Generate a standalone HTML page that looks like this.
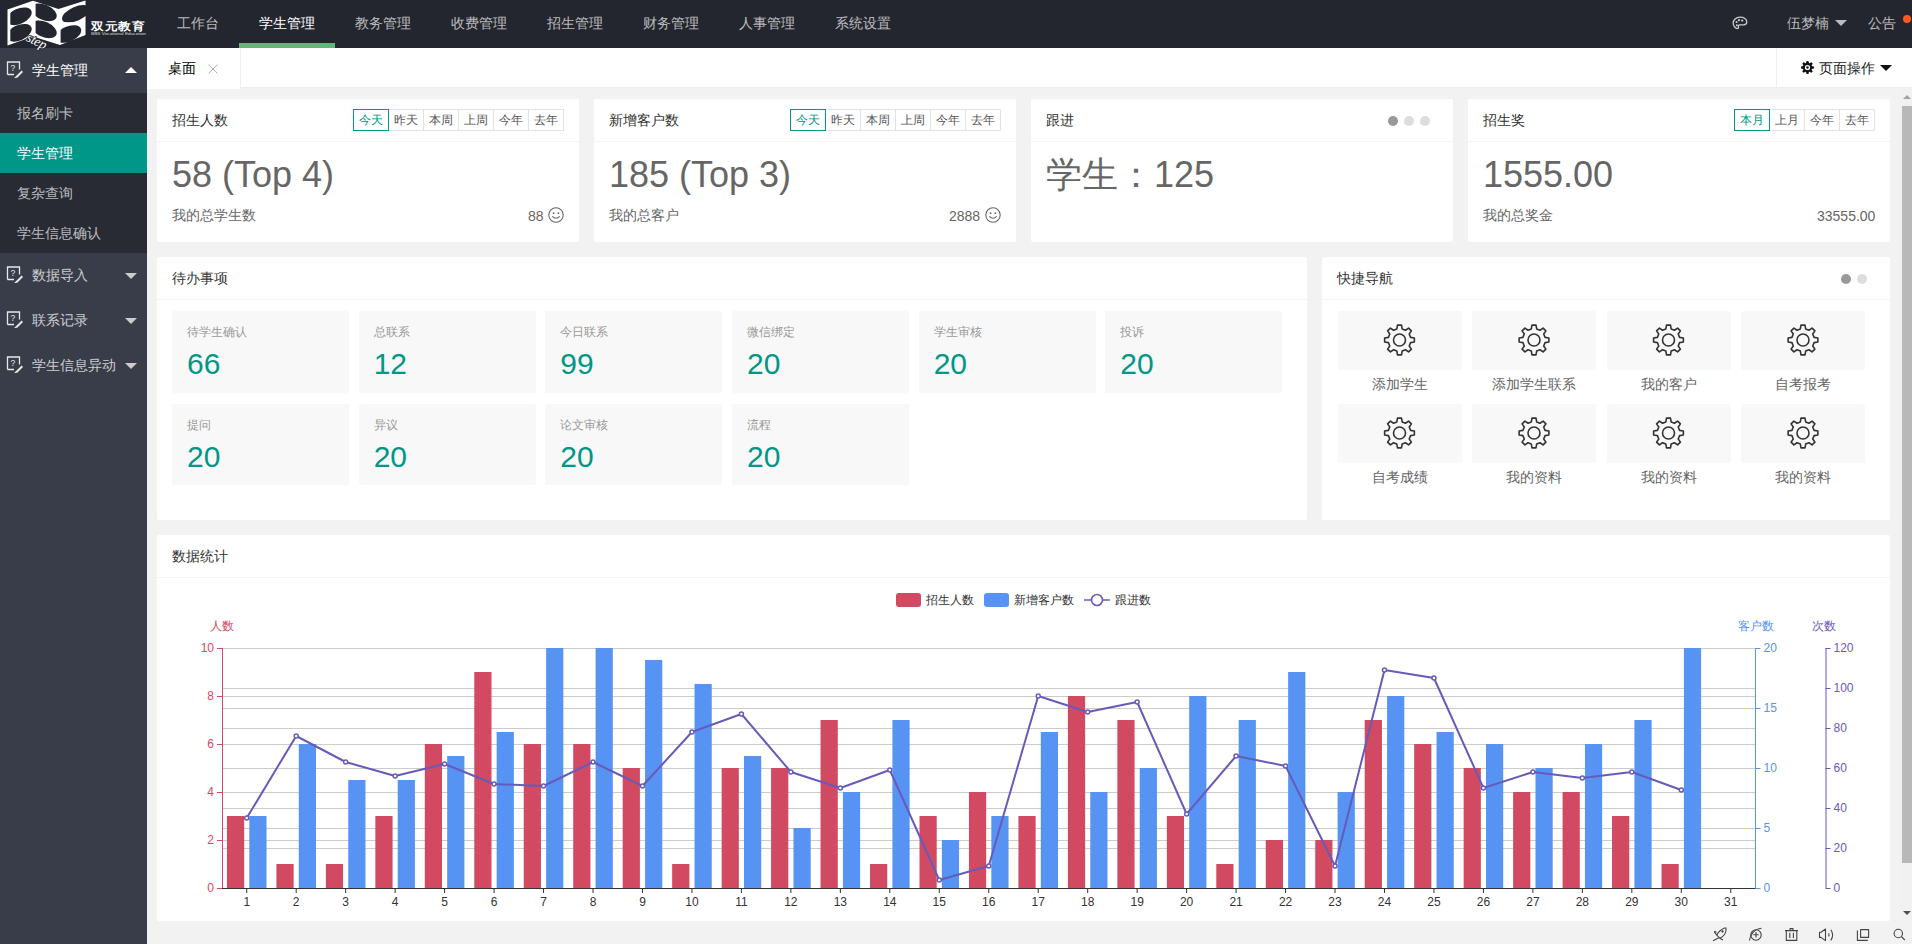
<!DOCTYPE html><html><head><meta charset="utf-8"><style>
*{margin:0;padding:0;box-sizing:border-box}
html,body{width:1912px;height:944px;overflow:hidden;background:#f2f2f2;font-family:"Liberation Sans",sans-serif;font-size:14px;color:#333}
.a{position:absolute}
.hdr{left:0;top:0;width:1912px;height:48px;background:#23262e}
.nav{top:0;height:48px;line-height:46px;color:rgba(255,255,255,.7);font-size:14px;white-space:nowrap}
.side{left:0;top:48px;width:147px;height:896px;background:#393d49}
.sitem{left:0;width:147px;height:45px;line-height:45px;color:rgba(255,255,255,.75);font-size:14px}
.child{left:0;width:147px;height:40px;line-height:40px;color:rgba(255,255,255,.7);padding-left:17px}
.tabs{left:147px;top:48px;width:1765px;height:40px;background:#fff;border-bottom:1px solid #eee}
.card{background:#fff;border-radius:2px}
.ct{font-size:14px;color:#333;line-height:20px;white-space:nowrap}
.btn{height:22px;line-height:20px;border:1px solid #e2e2e2;font-size:12px;color:#555;text-align:center;background:#fff}
.big{font-size:36px;color:#666;line-height:36px;white-space:nowrap;margin-top:1px}
.sub{font-size:14px;color:#666;line-height:20px;white-space:nowrap}
.hl{height:1px;background:#f3f3f3}
.bl{background:#f8f8f8;border-radius:2px}
.bl h3{position:absolute;left:15px;top:14px;font-size:12px;font-weight:normal;color:#999;line-height:14px}
.bl p{position:absolute;left:15px;top:38px;font-size:30px;color:#009688;line-height:30px}
.sc{background:#f8f8f8;border-radius:2px}
.scl{font-size:14px;color:#666;text-align:center;line-height:20px;white-space:nowrap}
</style></head><body><div class="a hdr"></div>
<svg class="a" style="left:0;top:0;z-index:5" width="160" height="52" viewBox="0 0 160 52">
<defs>
<clipPath id="cl"><rect x="10.3" y="0" width="22.5" height="52"/></clipPath>
<clipPath id="cm"><rect x="35.6" y="0" width="23" height="52"/></clipPath>
<clipPath id="cr1"><rect x="60.5" y="0" width="40" height="22.3"/></clipPath>
<clipPath id="cr2"><rect x="60.6" y="22.3" width="30" height="30"/></clipPath>
</defs>
<path d="M7.5 9.5 L33 0.8 L58.5 9 L85.5 0.5 L85.5 35 L60 45 L33 36.5 L7.5 45.5 Z" fill="#fff"/>
<g fill="#23262e">
<g clip-path="url(#cl)"><ellipse cx="19" cy="16.3" rx="13.5" ry="7.6" transform="rotate(-24 19 16.3)"/>
<ellipse cx="19" cy="32.8" rx="13.5" ry="7.6" transform="rotate(-24 19 32.8)"/></g>
<g clip-path="url(#cm)"><ellipse cx="44" cy="12.3" rx="13.5" ry="7.6" transform="rotate(24 44 12.3)"/>
<ellipse cx="44" cy="29.3" rx="13.5" ry="7.6" transform="rotate(24 44 29.3)"/></g>
<g clip-path="url(#cr1)"><ellipse cx="76" cy="13.8" rx="15" ry="7" transform="rotate(-24 76 13.8)"/></g>
<g clip-path="url(#cr2)"><ellipse cx="68.5" cy="34" rx="13.5" ry="7.6" transform="rotate(-24 68.5 34)"/></g>
</g>
<text x="0" y="0" transform="translate(25.5 40.5) rotate(26)" font-family="Liberation Serif, serif" font-style="italic" font-size="13.5" fill="#fff" stroke="#23262e" stroke-width="1.6" paint-order="stroke" letter-spacing="-0.3">step</text>
<text x="91" y="34.8" font-size="13.5" font-weight="bold" fill="#fff" textLength="55" lengthAdjust="spacingAndGlyphs" transform="scale(1 0.85)">双元教育</text>
<text x="91" y="35.2" font-size="3.6" fill="#ddd" textLength="55" lengthAdjust="spacingAndGlyphs">BBS Vocational Education</text>
</svg>
<div class="a nav" style="left:177px;">工作台</div>
<div class="a nav" style="left:259px;color:#fff;">学生管理</div>
<div class="a nav" style="left:355px;">教务管理</div>
<div class="a nav" style="left:451px;">收费管理</div>
<div class="a nav" style="left:547px;">招生管理</div>
<div class="a nav" style="left:643px;">财务管理</div>
<div class="a nav" style="left:739px;">人事管理</div>
<div class="a nav" style="left:835px;">系统设置</div>
<div class="a" style="left:239px;top:43px;width:96px;height:5px;background:#5fb878"></div>
<svg class="a" style="left:1732px;top:16px" width="16" height="14" viewBox="0 0 16 14"><path d="M8 1.2 C3.8 1.2 1.2 4 1.2 7 C1.2 10.3 3.5 12.6 5.6 12.6 C6.8 12.6 6.6 11.5 6.4 10.8 C6.1 9.8 6.6 8.8 7.8 8.8 L11.6 8.8 C13.6 8.8 14.8 7.8 14.8 5.8 C14.8 3.2 12 1.2 8 1.2 Z" fill="none" stroke="#ccc" stroke-width="1.3"/><circle cx="4.6" cy="6" r="1.1" fill="#ccc"/><circle cx="7" cy="4.2" r="1.1" fill="#ccc"/><circle cx="10.2" cy="4.6" r="1.1" fill="#ccc"/><circle cx="4.8" cy="9.2" r="1" fill="#ccc"/></svg>
<div class="a nav" style="left:1787px;">伍梦楠</div>
<div class="a" style="left:1835px;top:20px;width:0;height:0;border-left:6px solid transparent;border-right:6px solid transparent;border-top:6px solid #bbb"></div>
<div class="a nav" style="left:1868px;">公告</div>
<div class="a" style="left:1903px;top:15px;width:8px;height:8px;border-radius:50%;background:#ff5722"></div>
<div class="a side"></div>
<div class="a" style="left:0;top:93px;width:147px;height:160px;background:#282b33"></div>
<div class="a" style="left:0;top:133px;width:147px;height:40px;background:#009688"></div>
<svg class="a" style="left:6px;top:61px" width="18" height="18" viewBox="0 0 18 18"><path d="M1.5 13.5 V1 H13.5 V8.5 M1.5 13.5 H8" fill="none" stroke="#e8e8e8" stroke-width="1.3"/><text x="4.6" y="9.6" font-size="8.5" fill="#e8e8e8" font-family="Liberation Sans">?</text><path d="M9.6 15.6 L15.6 9.6 L17 11 L11 17 Z" fill="#e8e8e8"/><path d="M8.2 17 L9.6 15.6 L11 17 Z" fill="#e8e8e8"/></svg>
<div class="a sitem" style="top:48px;left:32px;width:90px;color:#fff">学生管理</div>
<div class="a" style="left:125px;top:67px;width:0;height:0;border-left:6px solid transparent;border-right:6px solid transparent;border-bottom:6px solid #fff"></div>
<div class="a child" style="top:93px;">报名刷卡</div>
<div class="a child" style="top:133px;color:#fff;">学生管理</div>
<div class="a child" style="top:173px;">复杂查询</div>
<div class="a child" style="top:213px;">学生信息确认</div>
<svg class="a" style="left:6px;top:266px" width="18" height="18" viewBox="0 0 18 18"><path d="M1.5 13.5 V1 H13.5 V8.5 M1.5 13.5 H8" fill="none" stroke="#e8e8e8" stroke-width="1.3"/><text x="4.6" y="9.6" font-size="8.5" fill="#e8e8e8" font-family="Liberation Sans">?</text><path d="M9.6 15.6 L15.6 9.6 L17 11 L11 17 Z" fill="#e8e8e8"/><path d="M8.2 17 L9.6 15.6 L11 17 Z" fill="#e8e8e8"/></svg>
<div class="a sitem" style="top:253px;left:32px;width:95px">数据导入</div>
<div class="a" style="left:125px;top:273px;width:0;height:0;border-left:6px solid transparent;border-right:6px solid transparent;border-top:6px solid #ccc"></div>
<svg class="a" style="left:6px;top:311px" width="18" height="18" viewBox="0 0 18 18"><path d="M1.5 13.5 V1 H13.5 V8.5 M1.5 13.5 H8" fill="none" stroke="#e8e8e8" stroke-width="1.3"/><text x="4.6" y="9.6" font-size="8.5" fill="#e8e8e8" font-family="Liberation Sans">?</text><path d="M9.6 15.6 L15.6 9.6 L17 11 L11 17 Z" fill="#e8e8e8"/><path d="M8.2 17 L9.6 15.6 L11 17 Z" fill="#e8e8e8"/></svg>
<div class="a sitem" style="top:298px;left:32px;width:95px">联系记录</div>
<div class="a" style="left:125px;top:318px;width:0;height:0;border-left:6px solid transparent;border-right:6px solid transparent;border-top:6px solid #ccc"></div>
<svg class="a" style="left:6px;top:356px" width="18" height="18" viewBox="0 0 18 18"><path d="M1.5 13.5 V1 H13.5 V8.5 M1.5 13.5 H8" fill="none" stroke="#e8e8e8" stroke-width="1.3"/><text x="4.6" y="9.6" font-size="8.5" fill="#e8e8e8" font-family="Liberation Sans">?</text><path d="M9.6 15.6 L15.6 9.6 L17 11 L11 17 Z" fill="#e8e8e8"/><path d="M8.2 17 L9.6 15.6 L11 17 Z" fill="#e8e8e8"/></svg>
<div class="a sitem" style="top:343px;left:32px;width:95px">学生信息异动</div>
<div class="a" style="left:125px;top:363px;width:0;height:0;border-left:6px solid transparent;border-right:6px solid transparent;border-top:6px solid #ccc"></div>
<div class="a tabs"></div>
<div class="a" style="left:147px;top:48px;width:94px;height:41px;background:#fff;border-right:1px solid #eee"></div>
<div class="a ct" style="left:168px;top:58px;color:#000">桌面</div>
<svg class="a" style="left:206px;top:62px" width="14" height="14"><path d="M2.5 2.5 L11.5 11.5 M11.5 2.5 L2.5 11.5" stroke="#b0b0b0" stroke-width="1"/></svg>
<div class="a" style="left:1776px;top:48px;width:1px;height:40px;background:#eee"></div>
<svg class="a" style="left:1801px;top:61px" width="13" height="13" viewBox="0 0 13 13"><path d="M4.94,2.17 L5.58,0.06 L7.42,0.06 L8.06,2.17 L8.46,2.34 L10.40,1.30 L11.70,2.60 L10.66,4.54 L10.83,4.94 L12.94,5.58 L12.94,7.42 L10.83,8.06 L10.66,8.46 L11.70,10.40 L10.40,11.70 L8.46,10.66 L8.06,10.83 L7.42,12.94 L5.58,12.94 L4.94,10.83 L4.54,10.66 L2.60,11.70 L1.30,10.40 L2.34,8.46 L2.17,8.06 L0.06,7.42 L0.06,5.58 L2.17,4.94 L2.34,4.54 L1.30,2.60 L2.60,1.30 L4.54,2.34Z" fill="#111"/><circle cx="6.5" cy="6.5" r="2.6" fill="#fff"/><circle cx="6.5" cy="6.5" r="1.2" fill="#111"/></svg>
<div class="a ct" style="left:1819px;top:58px;color:#222">页面操作</div>
<div class="a" style="left:1880px;top:65px;width:0;height:0;border-left:6px solid transparent;border-right:6px solid transparent;border-top:6px solid #111"></div>
<div class="a" style="left:1900px;top:89px;width:12px;height:832px;background:#f1f1f1"></div>
<div class="a" style="left:1902px;top:106px;width:10px;height:757px;background:#b8b8b8"></div>
<div class="a" style="left:1903px;top:95px;width:0;height:0;border-left:4px solid transparent;border-right:4px solid transparent;border-bottom:4px solid #a3a3a3"></div>
<div class="a" style="left:1903px;top:911px;width:0;height:0;border-left:4px solid transparent;border-right:4px solid transparent;border-top:4px solid #505050"></div>
<div class="a card" style="left:157px;top:99px;width:422px;height:143px"></div>
<div class="a hl" style="left:157px;top:141px;width:422px"></div>
<div class="a card" style="left:594px;top:99px;width:422px;height:143px"></div>
<div class="a hl" style="left:594px;top:141px;width:422px"></div>
<div class="a card" style="left:1031px;top:99px;width:422px;height:143px"></div>
<div class="a hl" style="left:1031px;top:141px;width:422px"></div>
<div class="a card" style="left:1468px;top:99px;width:422px;height:143px"></div>
<div class="a hl" style="left:1468px;top:141px;width:422px"></div>
<div class="a ct" style="left:172px;top:110px">招生人数</div>
<div class="a btn" style="left:353px;top:109px;width:36px;border-color:#009688;color:#009688;z-index:2">今天</div><div class="a btn" style="left:388px;top:109px;width:36px;">昨天</div><div class="a btn" style="left:423px;top:109px;width:36px;">本周</div><div class="a btn" style="left:458px;top:109px;width:36px;">上周</div><div class="a btn" style="left:493px;top:109px;width:36px;">今年</div><div class="a btn" style="left:528px;top:109px;width:36px;">去年</div>
<div class="a big" style="left:172px;top:156px">58 (Top 4)</div>
<div class="a sub" style="left:172px;top:205px">我的总学生数</div>
<div class="a sub" style="left:528px;top:206px">88</div>
<svg class="a" style="left:548px;top:207px" width="16" height="16" viewBox="0 0 16 16"><circle cx="8" cy="8" r="7.2" fill="none" stroke="#666" stroke-width="1.1"/><circle cx="5.6" cy="6.2" r="0.9" fill="#666"/><circle cx="10.4" cy="6.2" r="0.9" fill="#666"/><path d="M4.3 9.3 Q8 13.2 11.7 9.3" fill="none" stroke="#666" stroke-width="1.1"/></svg>
<div class="a ct" style="left:609px;top:110px">新增客户数</div>
<div class="a btn" style="left:790px;top:109px;width:36px;border-color:#009688;color:#009688;z-index:2">今天</div><div class="a btn" style="left:825px;top:109px;width:36px;">昨天</div><div class="a btn" style="left:860px;top:109px;width:36px;">本周</div><div class="a btn" style="left:895px;top:109px;width:36px;">上周</div><div class="a btn" style="left:930px;top:109px;width:36px;">今年</div><div class="a btn" style="left:965px;top:109px;width:36px;">去年</div>
<div class="a big" style="left:609px;top:156px">185 (Top 3)</div>
<div class="a sub" style="left:609px;top:205px">我的总客户</div>
<div class="a sub" style="left:949px;top:206px">2888</div>
<svg class="a" style="left:985px;top:207px" width="16" height="16" viewBox="0 0 16 16"><circle cx="8" cy="8" r="7.2" fill="none" stroke="#666" stroke-width="1.1"/><circle cx="5.6" cy="6.2" r="0.9" fill="#666"/><circle cx="10.4" cy="6.2" r="0.9" fill="#666"/><path d="M4.3 9.3 Q8 13.2 11.7 9.3" fill="none" stroke="#666" stroke-width="1.1"/></svg>
<div class="a ct" style="left:1046px;top:110px">跟进</div>
<div class="a" style="left:1388px;top:116px;width:10px;height:10px;border-radius:50%;background:#999"></div>
<div class="a" style="left:1404px;top:116px;width:10px;height:10px;border-radius:50%;background:#ddd"></div>
<div class="a" style="left:1420px;top:116px;width:10px;height:10px;border-radius:50%;background:#ddd"></div>
<div class="a big" style="left:1046px;top:156px">学生：125</div>
<div class="a ct" style="left:1483px;top:110px">招生奖</div>
<div class="a btn" style="left:1734px;top:109px;width:36px;border-color:#009688;color:#009688;z-index:2">本月</div><div class="a btn" style="left:1769px;top:109px;width:36px;">上月</div><div class="a btn" style="left:1804px;top:109px;width:36px;">今年</div><div class="a btn" style="left:1839px;top:109px;width:36px;">去年</div>
<div class="a big" style="left:1483px;top:156px">1555.00</div>
<div class="a sub" style="left:1483px;top:205px">我的总奖金</div>
<div class="a sub" style="left:1817px;top:206px">33555.00</div>
<div class="a card" style="left:157px;top:257px;width:1150px;height:263px"></div>
<div class="a hl" style="left:157px;top:299px;width:1150px"></div>
<div class="a ct" style="left:172px;top:268px">待办事项</div>
<div class="a bl" style="left:172.0px;top:311.0px;width:177px;height:81.5px"><h3>待学生确认</h3><p>66</p></div>
<div class="a bl" style="left:358.7px;top:311.0px;width:177px;height:81.5px"><h3>总联系</h3><p>12</p></div>
<div class="a bl" style="left:545.3px;top:311.0px;width:177px;height:81.5px"><h3>今日联系</h3><p>99</p></div>
<div class="a bl" style="left:732.0px;top:311.0px;width:177px;height:81.5px"><h3>微信绑定</h3><p>20</p></div>
<div class="a bl" style="left:918.7px;top:311.0px;width:177px;height:81.5px"><h3>学生审核</h3><p>20</p></div>
<div class="a bl" style="left:1105.3px;top:311.0px;width:177px;height:81.5px"><h3>投诉</h3><p>20</p></div>
<div class="a bl" style="left:172.0px;top:403.5px;width:177px;height:81.5px"><h3>提问</h3><p>20</p></div>
<div class="a bl" style="left:358.7px;top:403.5px;width:177px;height:81.5px"><h3>异议</h3><p>20</p></div>
<div class="a bl" style="left:545.3px;top:403.5px;width:177px;height:81.5px"><h3>论文审核</h3><p>20</p></div>
<div class="a bl" style="left:732.0px;top:403.5px;width:177px;height:81.5px"><h3>流程</h3><p>20</p></div>
<div class="a card" style="left:1322px;top:257px;width:568px;height:263px"></div>
<div class="a hl" style="left:1322px;top:299px;width:568px"></div>
<div class="a ct" style="left:1337px;top:268px">快捷导航</div>
<div class="a" style="left:1841px;top:274px;width:10px;height:10px;border-radius:50%;background:#999"></div>
<div class="a" style="left:1857px;top:274px;width:10px;height:10px;border-radius:50%;background:#ddd"></div>
<div class="a sc" style="left:1337.5px;top:311px;width:124px;height:59px"></div>
<div class="a scl" style="left:1337.5px;top:374px;width:124px">添加学生</div>
<div class="a sc" style="left:1472.0px;top:311px;width:124px;height:59px"></div>
<div class="a scl" style="left:1472.0px;top:374px;width:124px">添加学生联系</div>
<div class="a sc" style="left:1606.5px;top:311px;width:124px;height:59px"></div>
<div class="a scl" style="left:1606.5px;top:374px;width:124px">我的客户</div>
<div class="a sc" style="left:1741.0px;top:311px;width:124px;height:59px"></div>
<div class="a scl" style="left:1741.0px;top:374px;width:124px">自考报考</div>
<div class="a sc" style="left:1337.5px;top:404px;width:124px;height:59px"></div>
<div class="a scl" style="left:1337.5px;top:467px;width:124px">自考成绩</div>
<div class="a sc" style="left:1472.0px;top:404px;width:124px;height:59px"></div>
<div class="a scl" style="left:1472.0px;top:467px;width:124px">我的资料</div>
<div class="a sc" style="left:1606.5px;top:404px;width:124px;height:59px"></div>
<div class="a scl" style="left:1606.5px;top:467px;width:124px">我的资料</div>
<div class="a sc" style="left:1741.0px;top:404px;width:124px;height:59px"></div>
<div class="a scl" style="left:1741.0px;top:467px;width:124px">我的资料</div>
<div class="a card" style="left:157px;top:535px;width:1733px;height:386px"></div>
<div class="a hl" style="left:157px;top:577px;width:1733px"></div>
<div class="a ct" style="left:172px;top:546px">数据统计</div>
<svg width="1733" height="386" viewBox="157 535 1733 386" style="position:absolute;left:157px;top:535px" font-family="Liberation Sans, sans-serif" font-size="12">
<line x1="222" y1="648.5" x2="1755.5" y2="648.5" stroke="#ccc" stroke-width="1"/>
<line x1="222" y1="688.5" x2="1755.5" y2="688.5" stroke="#ccc" stroke-width="1"/>
<line x1="222" y1="696.5" x2="1755.5" y2="696.5" stroke="#ccc" stroke-width="1"/>
<line x1="222" y1="708.5" x2="1755.5" y2="708.5" stroke="#ccc" stroke-width="1"/>
<line x1="222" y1="728.5" x2="1755.5" y2="728.5" stroke="#ccc" stroke-width="1"/>
<line x1="222" y1="744.5" x2="1755.5" y2="744.5" stroke="#ccc" stroke-width="1"/>
<line x1="222" y1="768.5" x2="1755.5" y2="768.5" stroke="#ccc" stroke-width="1"/>
<line x1="222" y1="792.5" x2="1755.5" y2="792.5" stroke="#ccc" stroke-width="1"/>
<line x1="222" y1="808.5" x2="1755.5" y2="808.5" stroke="#ccc" stroke-width="1"/>
<line x1="222" y1="828.5" x2="1755.5" y2="828.5" stroke="#ccc" stroke-width="1"/>
<line x1="222" y1="840.5" x2="1755.5" y2="840.5" stroke="#ccc" stroke-width="1"/>
<line x1="222" y1="848.5" x2="1755.5" y2="848.5" stroke="#ccc" stroke-width="1"/>
<rect x="226.95" y="816" width="17.21" height="72" fill="#d14a61"/>
<rect x="249.31" y="816" width="17.21" height="72" fill="#5793f3"/>
<rect x="276.41" y="864" width="17.21" height="24" fill="#d14a61"/>
<rect x="298.78" y="744" width="17.21" height="144" fill="#5793f3"/>
<rect x="325.88" y="864" width="17.21" height="24" fill="#d14a61"/>
<rect x="348.25" y="780" width="17.21" height="108" fill="#5793f3"/>
<rect x="375.35" y="816" width="17.21" height="72" fill="#d14a61"/>
<rect x="397.72" y="780" width="17.21" height="108" fill="#5793f3"/>
<rect x="424.82" y="744" width="17.21" height="144" fill="#d14a61"/>
<rect x="447.19" y="756" width="17.21" height="132" fill="#5793f3"/>
<rect x="474.29" y="672" width="17.21" height="216" fill="#d14a61"/>
<rect x="496.65" y="732" width="17.21" height="156" fill="#5793f3"/>
<rect x="523.75" y="744" width="17.21" height="144" fill="#d14a61"/>
<rect x="546.12" y="648" width="17.21" height="240" fill="#5793f3"/>
<rect x="573.22" y="744" width="17.21" height="144" fill="#d14a61"/>
<rect x="595.59" y="648" width="17.21" height="240" fill="#5793f3"/>
<rect x="622.69" y="768" width="17.21" height="120" fill="#d14a61"/>
<rect x="645.06" y="660" width="17.21" height="228" fill="#5793f3"/>
<rect x="672.16" y="864" width="17.21" height="24" fill="#d14a61"/>
<rect x="694.52" y="684" width="17.21" height="204" fill="#5793f3"/>
<rect x="721.62" y="768" width="17.21" height="120" fill="#d14a61"/>
<rect x="743.99" y="756" width="17.21" height="132" fill="#5793f3"/>
<rect x="771.09" y="768" width="17.21" height="120" fill="#d14a61"/>
<rect x="793.46" y="828" width="17.21" height="60" fill="#5793f3"/>
<rect x="820.56" y="720" width="17.21" height="168" fill="#d14a61"/>
<rect x="842.93" y="792" width="17.21" height="96" fill="#5793f3"/>
<rect x="870.03" y="864" width="17.21" height="24" fill="#d14a61"/>
<rect x="892.40" y="720" width="17.21" height="168" fill="#5793f3"/>
<rect x="919.50" y="816" width="17.21" height="72" fill="#d14a61"/>
<rect x="941.86" y="840" width="17.21" height="48" fill="#5793f3"/>
<rect x="968.96" y="792" width="17.21" height="96" fill="#d14a61"/>
<rect x="991.33" y="816" width="17.21" height="72" fill="#5793f3"/>
<rect x="1018.43" y="816" width="17.21" height="72" fill="#d14a61"/>
<rect x="1040.80" y="732" width="17.21" height="156" fill="#5793f3"/>
<rect x="1067.90" y="696" width="17.21" height="192" fill="#d14a61"/>
<rect x="1090.27" y="792" width="17.21" height="96" fill="#5793f3"/>
<rect x="1117.37" y="720" width="17.21" height="168" fill="#d14a61"/>
<rect x="1139.73" y="768" width="17.21" height="120" fill="#5793f3"/>
<rect x="1166.83" y="816" width="17.21" height="72" fill="#d14a61"/>
<rect x="1189.20" y="696" width="17.21" height="192" fill="#5793f3"/>
<rect x="1216.30" y="864" width="17.21" height="24" fill="#d14a61"/>
<rect x="1238.67" y="720" width="17.21" height="168" fill="#5793f3"/>
<rect x="1265.77" y="840" width="17.21" height="48" fill="#d14a61"/>
<rect x="1288.14" y="672" width="17.21" height="216" fill="#5793f3"/>
<rect x="1315.24" y="840" width="17.21" height="48" fill="#d14a61"/>
<rect x="1337.61" y="792" width="17.21" height="96" fill="#5793f3"/>
<rect x="1364.70" y="720" width="17.21" height="168" fill="#d14a61"/>
<rect x="1387.07" y="696" width="17.21" height="192" fill="#5793f3"/>
<rect x="1414.17" y="744" width="17.21" height="144" fill="#d14a61"/>
<rect x="1436.54" y="732" width="17.21" height="156" fill="#5793f3"/>
<rect x="1463.64" y="768" width="17.21" height="120" fill="#d14a61"/>
<rect x="1486.01" y="744" width="17.21" height="144" fill="#5793f3"/>
<rect x="1513.11" y="792" width="17.21" height="96" fill="#d14a61"/>
<rect x="1535.48" y="768" width="17.21" height="120" fill="#5793f3"/>
<rect x="1562.58" y="792" width="17.21" height="96" fill="#d14a61"/>
<rect x="1584.94" y="744" width="17.21" height="144" fill="#5793f3"/>
<rect x="1612.04" y="816" width="17.21" height="72" fill="#d14a61"/>
<rect x="1634.41" y="720" width="17.21" height="168" fill="#5793f3"/>
<rect x="1661.51" y="864" width="17.21" height="24" fill="#d14a61"/>
<rect x="1683.88" y="648" width="17.21" height="240" fill="#5793f3"/>
<polyline points="246.73,818 296.20,736 345.67,762 395.14,776 444.60,764 494.07,784 543.54,786 593.01,762 642.48,786 691.94,732 741.41,714 790.88,772 840.35,788 889.81,770 939.28,880 988.75,866 1038.22,696 1087.69,712 1137.15,702 1186.62,814 1236.09,756 1285.56,766 1335.02,866 1384.49,670 1433.96,678 1483.43,788 1532.90,772 1582.36,778 1631.83,772 1681.30,790" fill="none" stroke="#675bba" stroke-width="2" stroke-linejoin="round"/>
<circle cx="246.73" cy="818" r="2" fill="#fff" stroke="#675bba" stroke-width="1.5"/>
<circle cx="296.20" cy="736" r="2" fill="#fff" stroke="#675bba" stroke-width="1.5"/>
<circle cx="345.67" cy="762" r="2" fill="#fff" stroke="#675bba" stroke-width="1.5"/>
<circle cx="395.14" cy="776" r="2" fill="#fff" stroke="#675bba" stroke-width="1.5"/>
<circle cx="444.60" cy="764" r="2" fill="#fff" stroke="#675bba" stroke-width="1.5"/>
<circle cx="494.07" cy="784" r="2" fill="#fff" stroke="#675bba" stroke-width="1.5"/>
<circle cx="543.54" cy="786" r="2" fill="#fff" stroke="#675bba" stroke-width="1.5"/>
<circle cx="593.01" cy="762" r="2" fill="#fff" stroke="#675bba" stroke-width="1.5"/>
<circle cx="642.48" cy="786" r="2" fill="#fff" stroke="#675bba" stroke-width="1.5"/>
<circle cx="691.94" cy="732" r="2" fill="#fff" stroke="#675bba" stroke-width="1.5"/>
<circle cx="741.41" cy="714" r="2" fill="#fff" stroke="#675bba" stroke-width="1.5"/>
<circle cx="790.88" cy="772" r="2" fill="#fff" stroke="#675bba" stroke-width="1.5"/>
<circle cx="840.35" cy="788" r="2" fill="#fff" stroke="#675bba" stroke-width="1.5"/>
<circle cx="889.81" cy="770" r="2" fill="#fff" stroke="#675bba" stroke-width="1.5"/>
<circle cx="939.28" cy="880" r="2" fill="#fff" stroke="#675bba" stroke-width="1.5"/>
<circle cx="988.75" cy="866" r="2" fill="#fff" stroke="#675bba" stroke-width="1.5"/>
<circle cx="1038.22" cy="696" r="2" fill="#fff" stroke="#675bba" stroke-width="1.5"/>
<circle cx="1087.69" cy="712" r="2" fill="#fff" stroke="#675bba" stroke-width="1.5"/>
<circle cx="1137.15" cy="702" r="2" fill="#fff" stroke="#675bba" stroke-width="1.5"/>
<circle cx="1186.62" cy="814" r="2" fill="#fff" stroke="#675bba" stroke-width="1.5"/>
<circle cx="1236.09" cy="756" r="2" fill="#fff" stroke="#675bba" stroke-width="1.5"/>
<circle cx="1285.56" cy="766" r="2" fill="#fff" stroke="#675bba" stroke-width="1.5"/>
<circle cx="1335.02" cy="866" r="2" fill="#fff" stroke="#675bba" stroke-width="1.5"/>
<circle cx="1384.49" cy="670" r="2" fill="#fff" stroke="#675bba" stroke-width="1.5"/>
<circle cx="1433.96" cy="678" r="2" fill="#fff" stroke="#675bba" stroke-width="1.5"/>
<circle cx="1483.43" cy="788" r="2" fill="#fff" stroke="#675bba" stroke-width="1.5"/>
<circle cx="1532.90" cy="772" r="2" fill="#fff" stroke="#675bba" stroke-width="1.5"/>
<circle cx="1582.36" cy="778" r="2" fill="#fff" stroke="#675bba" stroke-width="1.5"/>
<circle cx="1631.83" cy="772" r="2" fill="#fff" stroke="#675bba" stroke-width="1.5"/>
<circle cx="1681.30" cy="790" r="2" fill="#fff" stroke="#675bba" stroke-width="1.5"/>
<line x1="222.5" y1="648" x2="222.5" y2="888" stroke="#d14a61"/>
<line x1="217" y1="888.5" x2="222" y2="888.5" stroke="#d14a61"/>
<text x="214" y="892" text-anchor="end" fill="#d14a61">0</text>
<line x1="217" y1="840.5" x2="222" y2="840.5" stroke="#d14a61"/>
<text x="214" y="844" text-anchor="end" fill="#d14a61">2</text>
<line x1="217" y1="792.5" x2="222" y2="792.5" stroke="#d14a61"/>
<text x="214" y="796" text-anchor="end" fill="#d14a61">4</text>
<line x1="217" y1="744.5" x2="222" y2="744.5" stroke="#d14a61"/>
<text x="214" y="748" text-anchor="end" fill="#d14a61">6</text>
<line x1="217" y1="696.5" x2="222" y2="696.5" stroke="#d14a61"/>
<text x="214" y="700" text-anchor="end" fill="#d14a61">8</text>
<line x1="217" y1="648.5" x2="222" y2="648.5" stroke="#d14a61"/>
<text x="214" y="652" text-anchor="end" fill="#d14a61">10</text>
<text x="222" y="630" text-anchor="middle" fill="#d14a61">人数</text>
<line x1="1755.5" y1="648" x2="1755.5" y2="888" stroke="#5793f3"/>
<line x1="1755.5" y1="888.5" x2="1760.5" y2="888.5" stroke="#5793f3"/>
<text x="1763.5" y="892" fill="#5793f3">0</text>
<line x1="1755.5" y1="828.5" x2="1760.5" y2="828.5" stroke="#5793f3"/>
<text x="1763.5" y="832" fill="#5793f3">5</text>
<line x1="1755.5" y1="768.5" x2="1760.5" y2="768.5" stroke="#5793f3"/>
<text x="1763.5" y="772" fill="#5793f3">10</text>
<line x1="1755.5" y1="708.5" x2="1760.5" y2="708.5" stroke="#5793f3"/>
<text x="1763.5" y="712" fill="#5793f3">15</text>
<line x1="1755.5" y1="648.5" x2="1760.5" y2="648.5" stroke="#5793f3"/>
<text x="1763.5" y="652" fill="#5793f3">20</text>
<text x="1755.5" y="630" text-anchor="middle" fill="#5793f3">客户数</text>
<line x1="1826.0" y1="648" x2="1826.0" y2="888" stroke="#675bba"/>
<line x1="1825.5" y1="888.5" x2="1830.5" y2="888.5" stroke="#675bba"/>
<text x="1833.5" y="892" fill="#675bba">0</text>
<line x1="1825.5" y1="848.5" x2="1830.5" y2="848.5" stroke="#675bba"/>
<text x="1833.5" y="852" fill="#675bba">20</text>
<line x1="1825.5" y1="808.5" x2="1830.5" y2="808.5" stroke="#675bba"/>
<text x="1833.5" y="812" fill="#675bba">40</text>
<line x1="1825.5" y1="768.5" x2="1830.5" y2="768.5" stroke="#675bba"/>
<text x="1833.5" y="772" fill="#675bba">60</text>
<line x1="1825.5" y1="728.5" x2="1830.5" y2="728.5" stroke="#675bba"/>
<text x="1833.5" y="732" fill="#675bba">80</text>
<line x1="1825.5" y1="688.5" x2="1830.5" y2="688.5" stroke="#675bba"/>
<text x="1833.5" y="692" fill="#675bba">100</text>
<line x1="1825.5" y1="648.5" x2="1830.5" y2="648.5" stroke="#675bba"/>
<text x="1833.5" y="652" fill="#675bba">120</text>
<text x="1824.0" y="630" text-anchor="middle" fill="#675bba">次数</text>
<line x1="222" y1="888.5" x2="1755.5" y2="888.5" stroke="#333"/>
<line x1="246.73" y1="888" x2="246.73" y2="893" stroke="#333"/>
<text x="246.73" y="906" text-anchor="middle" fill="#333">1</text>
<line x1="296.20" y1="888" x2="296.20" y2="893" stroke="#333"/>
<text x="296.20" y="906" text-anchor="middle" fill="#333">2</text>
<line x1="345.67" y1="888" x2="345.67" y2="893" stroke="#333"/>
<text x="345.67" y="906" text-anchor="middle" fill="#333">3</text>
<line x1="395.14" y1="888" x2="395.14" y2="893" stroke="#333"/>
<text x="395.14" y="906" text-anchor="middle" fill="#333">4</text>
<line x1="444.60" y1="888" x2="444.60" y2="893" stroke="#333"/>
<text x="444.60" y="906" text-anchor="middle" fill="#333">5</text>
<line x1="494.07" y1="888" x2="494.07" y2="893" stroke="#333"/>
<text x="494.07" y="906" text-anchor="middle" fill="#333">6</text>
<line x1="543.54" y1="888" x2="543.54" y2="893" stroke="#333"/>
<text x="543.54" y="906" text-anchor="middle" fill="#333">7</text>
<line x1="593.01" y1="888" x2="593.01" y2="893" stroke="#333"/>
<text x="593.01" y="906" text-anchor="middle" fill="#333">8</text>
<line x1="642.48" y1="888" x2="642.48" y2="893" stroke="#333"/>
<text x="642.48" y="906" text-anchor="middle" fill="#333">9</text>
<line x1="691.94" y1="888" x2="691.94" y2="893" stroke="#333"/>
<text x="691.94" y="906" text-anchor="middle" fill="#333">10</text>
<line x1="741.41" y1="888" x2="741.41" y2="893" stroke="#333"/>
<text x="741.41" y="906" text-anchor="middle" fill="#333">11</text>
<line x1="790.88" y1="888" x2="790.88" y2="893" stroke="#333"/>
<text x="790.88" y="906" text-anchor="middle" fill="#333">12</text>
<line x1="840.35" y1="888" x2="840.35" y2="893" stroke="#333"/>
<text x="840.35" y="906" text-anchor="middle" fill="#333">13</text>
<line x1="889.81" y1="888" x2="889.81" y2="893" stroke="#333"/>
<text x="889.81" y="906" text-anchor="middle" fill="#333">14</text>
<line x1="939.28" y1="888" x2="939.28" y2="893" stroke="#333"/>
<text x="939.28" y="906" text-anchor="middle" fill="#333">15</text>
<line x1="988.75" y1="888" x2="988.75" y2="893" stroke="#333"/>
<text x="988.75" y="906" text-anchor="middle" fill="#333">16</text>
<line x1="1038.22" y1="888" x2="1038.22" y2="893" stroke="#333"/>
<text x="1038.22" y="906" text-anchor="middle" fill="#333">17</text>
<line x1="1087.69" y1="888" x2="1087.69" y2="893" stroke="#333"/>
<text x="1087.69" y="906" text-anchor="middle" fill="#333">18</text>
<line x1="1137.15" y1="888" x2="1137.15" y2="893" stroke="#333"/>
<text x="1137.15" y="906" text-anchor="middle" fill="#333">19</text>
<line x1="1186.62" y1="888" x2="1186.62" y2="893" stroke="#333"/>
<text x="1186.62" y="906" text-anchor="middle" fill="#333">20</text>
<line x1="1236.09" y1="888" x2="1236.09" y2="893" stroke="#333"/>
<text x="1236.09" y="906" text-anchor="middle" fill="#333">21</text>
<line x1="1285.56" y1="888" x2="1285.56" y2="893" stroke="#333"/>
<text x="1285.56" y="906" text-anchor="middle" fill="#333">22</text>
<line x1="1335.02" y1="888" x2="1335.02" y2="893" stroke="#333"/>
<text x="1335.02" y="906" text-anchor="middle" fill="#333">23</text>
<line x1="1384.49" y1="888" x2="1384.49" y2="893" stroke="#333"/>
<text x="1384.49" y="906" text-anchor="middle" fill="#333">24</text>
<line x1="1433.96" y1="888" x2="1433.96" y2="893" stroke="#333"/>
<text x="1433.96" y="906" text-anchor="middle" fill="#333">25</text>
<line x1="1483.43" y1="888" x2="1483.43" y2="893" stroke="#333"/>
<text x="1483.43" y="906" text-anchor="middle" fill="#333">26</text>
<line x1="1532.90" y1="888" x2="1532.90" y2="893" stroke="#333"/>
<text x="1532.90" y="906" text-anchor="middle" fill="#333">27</text>
<line x1="1582.36" y1="888" x2="1582.36" y2="893" stroke="#333"/>
<text x="1582.36" y="906" text-anchor="middle" fill="#333">28</text>
<line x1="1631.83" y1="888" x2="1631.83" y2="893" stroke="#333"/>
<text x="1631.83" y="906" text-anchor="middle" fill="#333">29</text>
<line x1="1681.30" y1="888" x2="1681.30" y2="893" stroke="#333"/>
<text x="1681.30" y="906" text-anchor="middle" fill="#333">30</text>
<line x1="1730.77" y1="888" x2="1730.77" y2="893" stroke="#333"/>
<text x="1730.77" y="906" text-anchor="middle" fill="#333">31</text>
<rect x="896" y="593" width="25" height="14" rx="3" fill="#d14a61"/>
<text x="926" y="603.5" fill="#333">招生人数</text>
<rect x="984" y="593" width="25" height="14" rx="3" fill="#5793f3"/>
<text x="1014" y="603.5" fill="#333">新增客户数</text>
<line x1="1084" y1="600" x2="1110" y2="600" stroke="#675bba" stroke-width="1.5"/>
<circle cx="1097" cy="600" r="5.5" fill="#fff" stroke="#675bba" stroke-width="1.6"/>
<text x="1115" y="603.5" fill="#333">跟进数</text>
</svg>
<svg class="a" style="left:0;top:0" width="1912" height="944"><path d="M1396.84,328.91 L1397.50,325.13 L1401.50,325.13 L1402.16,328.91 L1405.46,330.28 L1408.60,328.08 L1411.42,330.90 L1409.22,334.04 L1410.59,337.34 L1414.37,338.00 L1414.37,342.00 L1410.59,342.66 L1409.22,345.96 L1411.42,349.10 L1408.60,351.92 L1405.46,349.72 L1402.16,351.09 L1401.50,354.87 L1397.50,354.87 L1396.84,351.09 L1393.54,349.72 L1390.40,351.92 L1387.58,349.10 L1389.78,345.96 L1388.41,342.66 L1384.63,342.00 L1384.63,338.00 L1388.41,337.34 L1389.78,334.04 L1387.58,330.90 L1390.40,328.08 L1393.54,330.28Z" fill="none" stroke="#333" stroke-width="1.6" stroke-linejoin="round"/><circle cx="1399.5" cy="340" r="6.00" fill="none" stroke="#333" stroke-width="1.6"/><path d="M1531.34,328.91 L1532.00,325.13 L1536.00,325.13 L1536.66,328.91 L1539.96,330.28 L1543.10,328.08 L1545.92,330.90 L1543.72,334.04 L1545.09,337.34 L1548.87,338.00 L1548.87,342.00 L1545.09,342.66 L1543.72,345.96 L1545.92,349.10 L1543.10,351.92 L1539.96,349.72 L1536.66,351.09 L1536.00,354.87 L1532.00,354.87 L1531.34,351.09 L1528.04,349.72 L1524.90,351.92 L1522.08,349.10 L1524.28,345.96 L1522.91,342.66 L1519.13,342.00 L1519.13,338.00 L1522.91,337.34 L1524.28,334.04 L1522.08,330.90 L1524.90,328.08 L1528.04,330.28Z" fill="none" stroke="#333" stroke-width="1.6" stroke-linejoin="round"/><circle cx="1534.0" cy="340" r="6.00" fill="none" stroke="#333" stroke-width="1.6"/><path d="M1665.84,328.91 L1666.50,325.13 L1670.50,325.13 L1671.16,328.91 L1674.46,330.28 L1677.60,328.08 L1680.42,330.90 L1678.22,334.04 L1679.59,337.34 L1683.37,338.00 L1683.37,342.00 L1679.59,342.66 L1678.22,345.96 L1680.42,349.10 L1677.60,351.92 L1674.46,349.72 L1671.16,351.09 L1670.50,354.87 L1666.50,354.87 L1665.84,351.09 L1662.54,349.72 L1659.40,351.92 L1656.58,349.10 L1658.78,345.96 L1657.41,342.66 L1653.63,342.00 L1653.63,338.00 L1657.41,337.34 L1658.78,334.04 L1656.58,330.90 L1659.40,328.08 L1662.54,330.28Z" fill="none" stroke="#333" stroke-width="1.6" stroke-linejoin="round"/><circle cx="1668.5" cy="340" r="6.00" fill="none" stroke="#333" stroke-width="1.6"/><path d="M1800.34,328.91 L1801.00,325.13 L1805.00,325.13 L1805.66,328.91 L1808.96,330.28 L1812.10,328.08 L1814.92,330.90 L1812.72,334.04 L1814.09,337.34 L1817.87,338.00 L1817.87,342.00 L1814.09,342.66 L1812.72,345.96 L1814.92,349.10 L1812.10,351.92 L1808.96,349.72 L1805.66,351.09 L1805.00,354.87 L1801.00,354.87 L1800.34,351.09 L1797.04,349.72 L1793.90,351.92 L1791.08,349.10 L1793.28,345.96 L1791.91,342.66 L1788.13,342.00 L1788.13,338.00 L1791.91,337.34 L1793.28,334.04 L1791.08,330.90 L1793.90,328.08 L1797.04,330.28Z" fill="none" stroke="#333" stroke-width="1.6" stroke-linejoin="round"/><circle cx="1803.0" cy="340" r="6.00" fill="none" stroke="#333" stroke-width="1.6"/><path d="M1396.84,421.91 L1397.50,418.13 L1401.50,418.13 L1402.16,421.91 L1405.46,423.28 L1408.60,421.08 L1411.42,423.90 L1409.22,427.04 L1410.59,430.34 L1414.37,431.00 L1414.37,435.00 L1410.59,435.66 L1409.22,438.96 L1411.42,442.10 L1408.60,444.92 L1405.46,442.72 L1402.16,444.09 L1401.50,447.87 L1397.50,447.87 L1396.84,444.09 L1393.54,442.72 L1390.40,444.92 L1387.58,442.10 L1389.78,438.96 L1388.41,435.66 L1384.63,435.00 L1384.63,431.00 L1388.41,430.34 L1389.78,427.04 L1387.58,423.90 L1390.40,421.08 L1393.54,423.28Z" fill="none" stroke="#333" stroke-width="1.6" stroke-linejoin="round"/><circle cx="1399.5" cy="433" r="6.00" fill="none" stroke="#333" stroke-width="1.6"/><path d="M1531.34,421.91 L1532.00,418.13 L1536.00,418.13 L1536.66,421.91 L1539.96,423.28 L1543.10,421.08 L1545.92,423.90 L1543.72,427.04 L1545.09,430.34 L1548.87,431.00 L1548.87,435.00 L1545.09,435.66 L1543.72,438.96 L1545.92,442.10 L1543.10,444.92 L1539.96,442.72 L1536.66,444.09 L1536.00,447.87 L1532.00,447.87 L1531.34,444.09 L1528.04,442.72 L1524.90,444.92 L1522.08,442.10 L1524.28,438.96 L1522.91,435.66 L1519.13,435.00 L1519.13,431.00 L1522.91,430.34 L1524.28,427.04 L1522.08,423.90 L1524.90,421.08 L1528.04,423.28Z" fill="none" stroke="#333" stroke-width="1.6" stroke-linejoin="round"/><circle cx="1534.0" cy="433" r="6.00" fill="none" stroke="#333" stroke-width="1.6"/><path d="M1665.84,421.91 L1666.50,418.13 L1670.50,418.13 L1671.16,421.91 L1674.46,423.28 L1677.60,421.08 L1680.42,423.90 L1678.22,427.04 L1679.59,430.34 L1683.37,431.00 L1683.37,435.00 L1679.59,435.66 L1678.22,438.96 L1680.42,442.10 L1677.60,444.92 L1674.46,442.72 L1671.16,444.09 L1670.50,447.87 L1666.50,447.87 L1665.84,444.09 L1662.54,442.72 L1659.40,444.92 L1656.58,442.10 L1658.78,438.96 L1657.41,435.66 L1653.63,435.00 L1653.63,431.00 L1657.41,430.34 L1658.78,427.04 L1656.58,423.90 L1659.40,421.08 L1662.54,423.28Z" fill="none" stroke="#333" stroke-width="1.6" stroke-linejoin="round"/><circle cx="1668.5" cy="433" r="6.00" fill="none" stroke="#333" stroke-width="1.6"/><path d="M1800.34,421.91 L1801.00,418.13 L1805.00,418.13 L1805.66,421.91 L1808.96,423.28 L1812.10,421.08 L1814.92,423.90 L1812.72,427.04 L1814.09,430.34 L1817.87,431.00 L1817.87,435.00 L1814.09,435.66 L1812.72,438.96 L1814.92,442.10 L1812.10,444.92 L1808.96,442.72 L1805.66,444.09 L1805.00,447.87 L1801.00,447.87 L1800.34,444.09 L1797.04,442.72 L1793.90,444.92 L1791.08,442.10 L1793.28,438.96 L1791.91,435.66 L1788.13,435.00 L1788.13,431.00 L1791.91,430.34 L1793.28,427.04 L1791.08,423.90 L1793.90,421.08 L1797.04,423.28Z" fill="none" stroke="#333" stroke-width="1.6" stroke-linejoin="round"/><circle cx="1803.0" cy="433" r="6.00" fill="none" stroke="#333" stroke-width="1.6"/></svg>
<svg class="a" style="left:1700px;top:922px" width="212" height="22" viewBox="1700 922 212 22" fill="none" stroke="#444" stroke-width="1.1" stroke-linejoin="round">
<path d="M1726 928 L1724.5 928 C1721 929.5 1718 932.5 1716.8 935.2 L1719.8 938.2 C1722.5 937 1725.5 934 1726 930.5 Z"/>
<path d="M1716.5 932.2 L1714.2 931.2 M1716.8 935.2 L1714.3 932 M1719.8 938.2 L1723 940 M1718.8 937.8 L1713 940.8"/>
<circle cx="1722.5" cy="931.5" r="0.6" fill="#444"/>
<circle cx="1756" cy="935" r="5.2"/><path d="M1756 932 V937.5 M1753.3 934.8 H1758.7"/>
<path d="M1749.5 940.5 C1750 935 1754 929 1761.5 928.2"/>
<path d="M1785 930.6 H1798 M1790 930.6 V928.6 H1793 V930.6 M1786.3 930.6 V940.4 H1796.8 V930.6 M1789.8 932.8 V938 M1793.4 932.8 V938"/>
<path d="M1819.5 932.2 H1821 L1825.5 929 V940.6 L1821 937.4 H1819.5 Z" />
<path d="M1828.6 933.2 Q1829.6 934.8 1828.6 936.4 M1830.8 929.8 Q1834.5 935 1830.8 940.4"/>
<path d="M1860.6 929.6 H1868.6 V937.4 H1860.6 Z M1857.4 930.4 V940.4 H1867.8"/>
<circle cx="1898.3" cy="933.5" r="4.2"/><path d="M1901.3 936.5 L1904.8 940"/>
</svg></body></html>
